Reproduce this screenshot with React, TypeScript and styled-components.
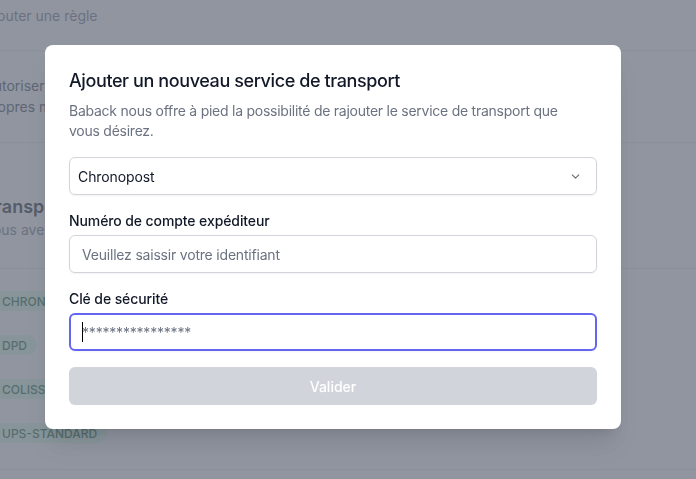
import React from "react";
import styled, { createGlobalStyle } from "styled-components";

const Global = createGlobalStyle`
  html, body { margin: 0; padding: 0; background: #ffffff; }
  body { font-family: Inter, "Noto Sans", "Liberation Sans", sans-serif; overflow: hidden; -webkit-font-smoothing: antialiased; }
  * { box-sizing: border-box; }
`;

const Page = styled.div`
  width: 1000px;
  margin-left: -16px;
  height: 479px;
  overflow: hidden;
`;

const RuleRow = styled.div`
  height: 51px;
  padding-top: 6px;
  border-bottom: 1px solid #e5e7eb;
  font-size: 14px;
  line-height: 20px;
  color: #6b7280;
`;

const SettingRow = styled.div`
  padding: 24px 0 25px;
  border-bottom: 1px solid #e5e7eb;
  font-size: 14px;
  line-height: 21px;
  color: #374151;
`;

const SectionHead = styled.div`
  padding: 52px 0 28px;
  border-bottom: 1px solid #e5e7eb;
`;

const SectionTitle = styled.h3`
  margin: 0;
  font-size: 18px;
  line-height: 24px;
  font-weight: 600;
  color: #111827;
`;

const SectionSub = styled.p`
  margin: 1px 0 0;
  font-size: 14px;
  line-height: 20px;
  color: #6b7280;
`;

const BadgeList = styled.div`
  padding: 10px 0 14px;
  border-bottom: 1px solid #e5e7eb;
`;

const BadgeRow = styled.div`
  height: 44px;
  display: flex;
  align-items: center;
`;

const Badge = styled.span`
  margin-left: 8px;
  display: inline-flex;
  align-items: center;
  height: 20px;
  padding: 0 10px;
  border-radius: 999px;
  background: #dcfce7;
  color: #166534;
  font-size: 12px;
  font-weight: 500;
`;

const Overlay = styled.div`
  position: fixed;
  inset: 0;
  background: rgba(107, 114, 128, 0.75);
  display: flex;
  align-items: flex-start;
  padding: 45px 0 0 45px;
`;

const Modal = styled.div`
  width: 576px;
  background: #ffffff;
  border-radius: 8px;
  padding: 24px;
  box-shadow: 0 20px 25px -5px rgba(0, 0, 0, 0.1), 0 8px 10px -6px rgba(0, 0, 0, 0.1);
  display: flex;
  flex-direction: column;
`;

const Title = styled.h3`
  margin: 0;
  font-size: 18px;
  line-height: 24px;
  font-weight: 500;
  letter-spacing: -0.4px;
  color: #111827;
`;

const Description = styled.p`
  margin: 8px 0 0;
  max-width: 512px;
  font-size: 14px;
  line-height: 20px;
  letter-spacing: -0.25px;
  color: #6b7280;
`;

const SelectBox = styled.div`
  margin-top: 16px;
  height: 38px;
  border: 1px solid #d1d5db;
  border-radius: 6px;
  display: flex;
  align-items: center;
  justify-content: space-between;
  padding: 0 14px 0 8px;
  font-size: 14px;
  letter-spacing: -0.1px;
  color: #111827;
  box-shadow: 0 1px 2px rgba(0, 0, 0, 0.05);
`;

const Label = styled.label`
  margin-top: 16px;
  display: block;
  font-size: 14px;
  line-height: 20px;
  font-weight: 500;
  letter-spacing: -0.1px;
  color: #111827;
`;

const Field = styled.div`
  position: relative;
  margin-top: 4px;
`;

const Input = styled.input<{ $focused?: boolean }>`
  display: block;
  width: 100%;
  height: 38px;
  border-radius: 6px;
  border: ${(p) => (p.$focused ? "2px solid #6366f1" : "1px solid #d1d5db")};
  padding: 0 ${(p) => (p.$focused ? "11px" : "12px")};
  font-family: inherit;
  font-size: 14px;
  letter-spacing: -0.2px;
  color: #111827;
  outline: none;
  box-shadow: 0 1px 2px rgba(0, 0, 0, 0.05);
  &::placeholder { color: #6b7280; }
`;

const Caret = styled.span`
  position: absolute;
  left: 13px;
  top: 9px;
  width: 1px;
  height: 20px;
  background: #000;
`;

const Submit = styled.button`
  margin-top: 16px;
  height: 38px;
  border: none;
  border-radius: 6px;
  background: #d1d5db;
  color: #ffffff;
  font-family: inherit;
  font-size: 14px;
  font-weight: 500;
`;

const Chevron = () => (
  <svg width="13" height="13" viewBox="0 0 20 20" fill="none">
    <path d="M5 7.5l5 5 5-5" stroke="#6b7280" strokeWidth="1.8" strokeLinecap="round" strokeLinejoin="round" />
  </svg>
);

export default function App() {
  return (
    <>
      <Global />
      <Page>
        <RuleRow>Ajouter une règle</RuleRow>
        <SettingRow>
          Autoriser les clients à utiliser leurs
          <br />
          propres moyens de transport
        </SettingRow>
        <SectionHead>
          <SectionTitle>Transport</SectionTitle>
          <SectionSub>Vous avez la possibilité d'ajouter vos transporteurs</SectionSub>
        </SectionHead>
        <BadgeList>
          <BadgeRow><Badge>CHRONOPOST</Badge></BadgeRow>
          <BadgeRow><Badge>DPD</Badge></BadgeRow>
          <BadgeRow><Badge>COLISSIMO</Badge></BadgeRow>
          <BadgeRow><Badge>UPS-STANDARD</Badge></BadgeRow>
        </BadgeList>
      </Page>
      <Overlay>
        <Modal>
          <Title>Ajouter un nouveau service de transport</Title>
          <Description>
            Baback nous offre à pied la possibilité de rajouter le service de transport que vous désirez.
          </Description>
          <SelectBox>
            <span>Chronopost</span>
            <Chevron />
          </SelectBox>
          <Label>Numéro de compte expéditeur</Label>
          <Field>
            <Input placeholder="Veuillez saissir votre identifiant" />
          </Field>
          <Label>Clé de sécurité</Label>
          <Field>
            <Input $focused type="password" placeholder="****************" />
            <Caret />
          </Field>
          <Submit>Valider</Submit>
        </Modal>
      </Overlay>
    </>
  );
}
